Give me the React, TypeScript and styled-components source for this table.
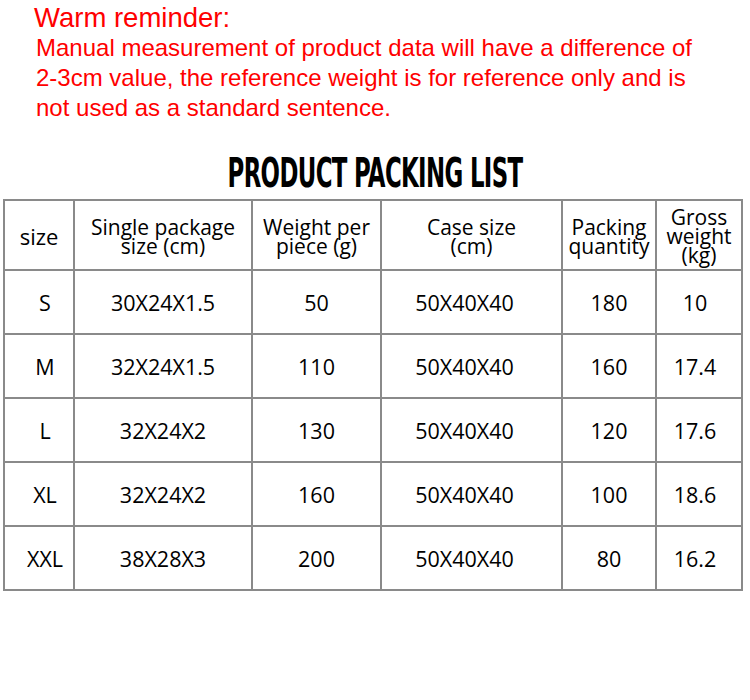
import React from "react";
import styled, { createGlobalStyle } from "styled-components";

const Global = createGlobalStyle`
  html, body { margin: 0; padding: 0; background: #fff; }
  body { width: 750px; height: 700px; overflow: hidden; }
`;

const Page = styled.div`
  width: 750px;
  height: 700px;
  background: #fff;
  display: flex;
  flex-direction: column;
`;

const Reminder = styled.div`
  padding: 3px 0 0 34px;
  color: #ff0000;
  font-family: "Liberation Sans", Arial, sans-serif;
`;

const ReminderTitle = styled.div`
  font-size: 27.5px;
  line-height: 30px;
`;

const ReminderBody = styled.div`
  padding-left: 2px;
  font-size: 24px;
  line-height: 30px;
`;

const Title = styled.h1`
  margin: 28px 0 4px;
  text-align: center;
  font-family: "DejaVu Sans Condensed", "DejaVu Sans", sans-serif;
  font-stretch: condensed;
  font-weight: 900;
  font-size: 40px;
  line-height: 44px;
  color: #000;
  letter-spacing: -1px;
  transform: scaleX(0.635);
`;

const Table = styled.table`
  margin: 0 0 0 3px;
  width: 739px;
  border-collapse: collapse;
  table-layout: fixed;
  font-family: "Open Sans", sans-serif;
  color: #000;
`;

const HeadCell = styled.th<{ $w: number }>`
  width: ${(p) => p.$w}px;
  height: 65px;
  border: 2px solid #8a8a8a;
  font-weight: 400;
  font-size: 21px;
  line-height: 19px;
  text-align: center;
  vertical-align: middle;
  padding: 3px 0 0;
`;

const Cell = styled.td<{ $shift: number }>`
  height: 62px;
  border: 2px solid #8a8a8a;
  font-size: 21.5px;
  text-align: center;
  vertical-align: middle;
  padding: 0 ${(p) => (p.$shift < 0 ? -p.$shift * 2 : 0)}px 0
    ${(p) => (p.$shift > 0 ? p.$shift * 2 : 0)}px;
`;

const headers: { w: number; label: React.ReactNode }[] = [
  { w: 68, label: <span style={{ fontSize: 22 }}>size</span> },
  { w: 176, label: <>Single package<br />size (cm)</> },
  { w: 127, label: <>Weight per<br />piece (g)</> },
  { w: 179, label: <>Case size<br />(cm)</> },
  { w: 92, label: <>Packing<br />quantity</> },
  { w: 84, label: <>Gross<br />weight<br />(kg)</> },
];

const shifts = [6, 0, 0, -7, 0, -4];

const rows = [
  ["S", "30X24X1.5", "50", "50X40X40", "180", "10"],
  ["M", "32X24X1.5", "110", "50X40X40", "160", "17.4"],
  ["L", "32X24X2", "130", "50X40X40", "120", "17.6"],
  ["XL", "32X24X2", "160", "50X40X40", "100", "18.6"],
  ["XXL", "38X28X3", "200", "50X40X40", "80", "16.2"],
];

export default function App() {
  return (
    <Page>
      <Global />
      <Reminder>
        <ReminderTitle>Warm reminder:</ReminderTitle>
        <ReminderBody>
          Manual measurement of product data will have a difference of
          <br />
          2-3cm value, the reference weight is for reference only and is
          <br />
          not used as a standard sentence.
        </ReminderBody>
      </Reminder>
      <Title>PRODUCT PACKING LIST</Title>
      <Table>
        <thead>
          <tr>
            {headers.map((h, i) => (
              <HeadCell key={i} $w={h.w}>
                {h.label}
              </HeadCell>
            ))}
          </tr>
        </thead>
        <tbody>
          {rows.map((r) => (
            <tr key={r[0]}>
              {r.map((c, i) => (
                <Cell key={i} $shift={shifts[i]}>
                  {c}
                </Cell>
              ))}
            </tr>
          ))}
        </tbody>
      </Table>
    </Page>
  );
}
